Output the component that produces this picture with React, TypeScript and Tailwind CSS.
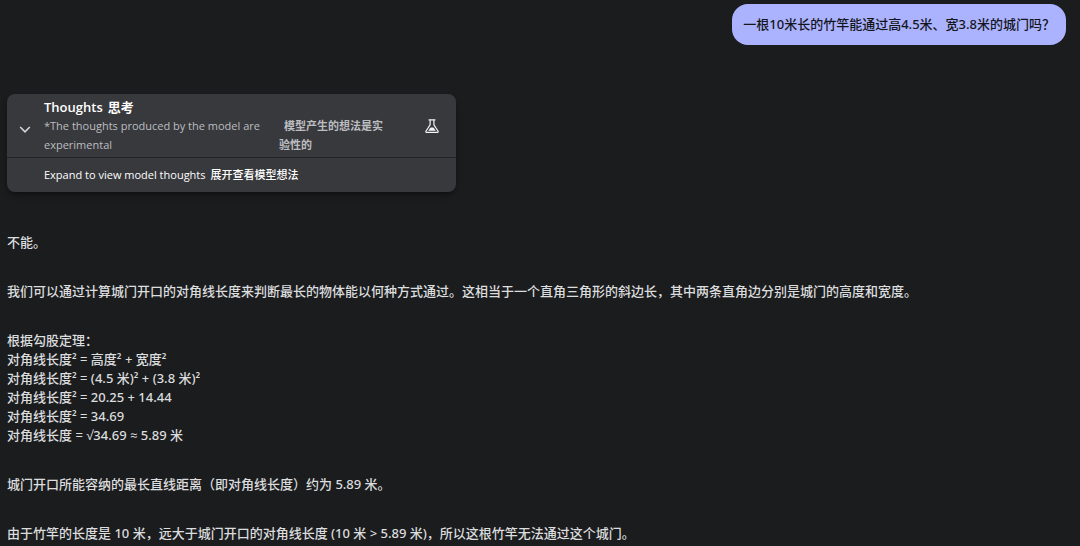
import React from "react";

function ChevronDown() {
  return (
    <svg viewBox="0 0 12 12" className="h-3 w-3" fill="none" stroke="#d5d6d9" strokeWidth="1.6" aria-hidden="true">
      <path d="M1.2 3 6 7.8 10.8 3" />
    </svg>
  );
}

function Flask() {
  return (
    <svg viewBox="0 0 14 14" className="h-3.5 w-3.5" fill="none" stroke="#f4f4f5" strokeWidth="1.2" aria-hidden="true">
      <path d="M3.6 .9h6.8" />
      <path d="M5.1 1v4.8L.9 12.2c-.3.6 0 1.1.6 1.1h11c.6 0 .9-.5.6-1.1L8.9 5.8V1" />
      <path d="M5.6 8.4h2.8l2.4 3.3H3.2z" fill="#f4f4f5" stroke="none" />
    </svg>
  );
}

function ThoughtsPanel() {
  return (
    <section className="w-[449px] max-w-full overflow-hidden rounded-lg bg-[#38393c] font-['Open_Sans','Noto_Sans_CJK_SC',sans-serif] shadow-md shadow-black/30">
      <header className="flex items-center border-b border-[#232427] pt-1 pb-[3px]">
        <button type="button" aria-label="Toggle thoughts" className="ml-3 mt-2 flex w-[25px] shrink-0">
          <ChevronDown />
        </button>
        <div className="flex-1">
          <h2 className="text-[13px] leading-[18px] font-semibold text-white">
            Thoughts<span className="ml-[5px]">思考</span>
          </h2>
          <div className="flex text-[11px] leading-[19px] font-medium text-[#bcbdc0]">
            <p className="w-[235px]">
              *The thoughts produced by the model are experimental
            </p>
            <p className="w-[110px] indent-[5px] font-semibold">模型产生的想法是实验性的</p>
          </div>
        </div>
        <span className="mr-[17px]">
          <Flask />
        </span>
      </header>
      <button type="button" className="block w-full py-2 pl-[37px] text-left text-[11px] leading-[18px] font-medium text-white">
        Expand to view model thoughts<span className="ml-[5px]">展开查看模型想法</span>
      </button>
    </section>
  );
}

export default function App() {
  return (
    <main
      lang="zh-CN"
      className="min-h-screen bg-[#1b1c1e] px-[7px] pt-1 font-['Noto_Sans','Open_Sans','Noto_Sans_CJK_SC',sans-serif]"
    >
      <div className="flex justify-end pr-[7px]">
        <p className="rounded-2xl bg-[#abb3ff] px-[11px] py-[11px] text-[13px] leading-[19px] font-medium text-[#15161c]">
          一根10米长的竹竿能通过高4.5米、宽3.8米的城门吗？
        </p>
      </div>
      <div className="mt-[49px]">
        <ThoughtsPanel />
      </div>
      <article className="mt-[41px] flex flex-col gap-[30px] text-[13px] leading-[19px] font-medium text-[#dcdddf]">
        <p>不能。</p>
        <p>
          我们可以通过计算城门开口的对角线长度来判断最长的物体能以何种方式通过。这相当于一个直角三角形的斜边长，其中两条直角边分别是城门的高度和宽度。
        </p>
        <p>
          根据勾股定理：
          <br />
          对角线长度² = 高度² + 宽度²
          <br />
          对角线长度² = (4.5 米)² + (3.8 米)²
          <br />
          对角线长度² = 20.25 + 14.44
          <br />
          对角线长度² = 34.69
          <br />
          对角线长度 = √34.69 ≈ 5.89 米
        </p>
        <p>城门开口所能容纳的最长直线距离（即对角线长度）约为 5.89 米。</p>
        <p>由于竹竿的长度是 10 米，远大于城门开口的对角线长度 (10 米 &gt; 5.89 米)，所以这根竹竿无法通过这个城门。</p>
      </article>
    </main>
  );
}
